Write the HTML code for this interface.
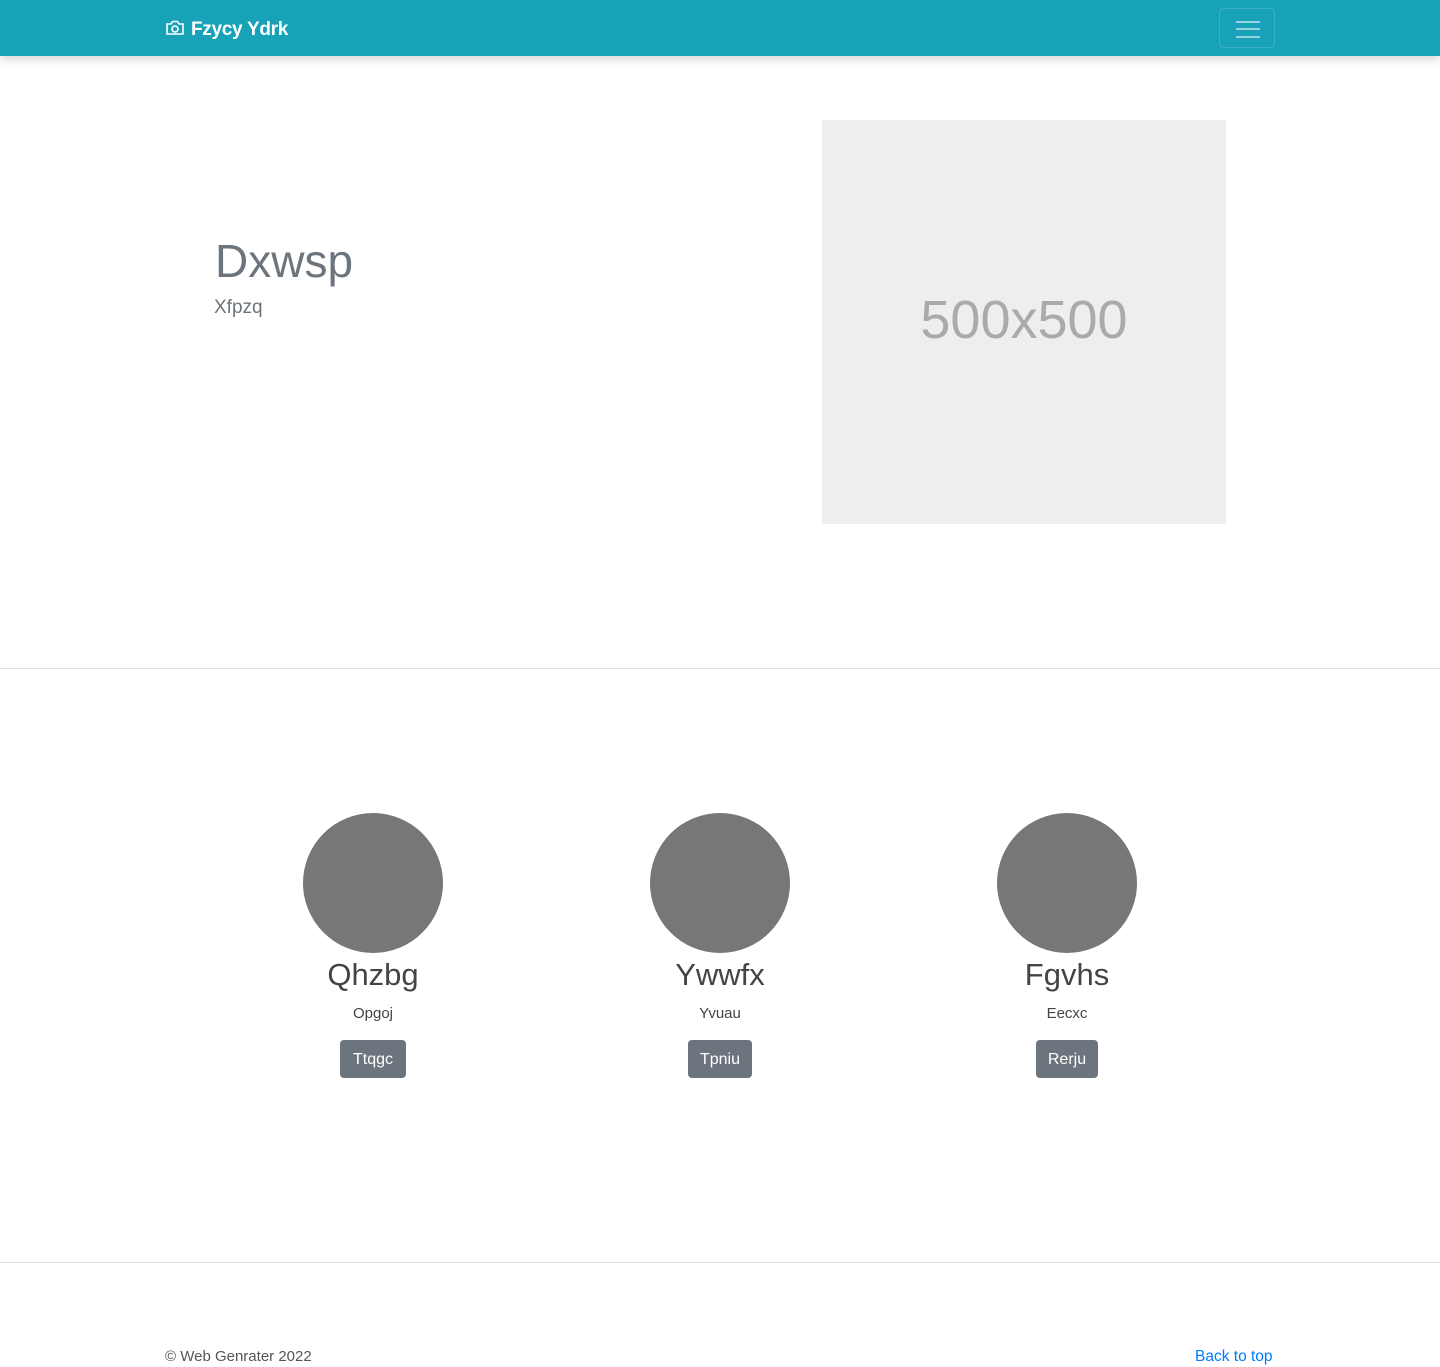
<!DOCTYPE html>
<html><head><style>
body{margin:0;font-family:"Liberation Sans",sans-serif;background:#fff;width:1440px;height:1367px;position:relative;overflow:hidden}
.nav{position:absolute;top:0;left:0;width:1440px;height:56px;background:#17a2b8;box-shadow:0 4px 8px rgba(0,0,0,.15)}
.brand{position:absolute;left:165px;top:19px;color:#fff;font-weight:bold;font-size:19px;letter-spacing:-0.3px}
.brand svg{vertical-align:-2px;margin-right:6px}
.tog{position:absolute;left:1219px;top:8px;width:56px;height:40px;border:1px solid rgba(255,255,255,.15);border-radius:4px;box-sizing:border-box}
.tog i{position:absolute;left:16px;width:24px;height:2px;background:rgba(255,255,255,.55)}
.t{position:absolute;color:#6c757d}
.img{position:absolute;left:822px;top:120px;width:404px;height:404px;background:#eee;color:#aaa;font-size:54px;text-align:center;line-height:400px}
hr{position:absolute;left:0;width:1440px;border:0;border-top:1px solid #dee2e6;margin:0}
.c{position:absolute;width:140px;height:140px;border-radius:50%;background:#777;top:813px}
.n{position:absolute;width:300px;text-align:center;color:#444}
.b{position:absolute;top:1040px;height:38px;background:#6c757d;color:#fff;border-radius:4px;font-size:16px;line-height:40px;text-align:center}
</style></head><body>
<div class="nav"><div class="brand"><svg width="20" height="18" viewBox="0 0 20 18" fill="none" stroke="#fff" stroke-width="1.6"><path d="M2 5h4l1.5-2.5h5L14 5h4v10H2z"/><circle cx="10" cy="10" r="3"/></svg>Fzycy Ydrk</div>
<div class="tog"><i style="top:12px"></i><i style="top:19px"></i><i style="top:27px"></i></div></div>
<div class="t" style="left:215px;top:234px;font-size:46px">Dxwsp</div>
<div class="t" style="left:214px;top:297px;font-size:19px">Xfpzq</div>
<div class="img">500x500</div>
<hr style="top:668px">
<div class="c" style="left:303px"></div><div class="c" style="left:650px"></div><div class="c" style="left:997px"></div>
<div class="n" style="left:223px;top:957px;font-size:31px">Qhzbg</div>
<div class="n" style="left:570px;top:957px;font-size:31px">Ywwfx</div>
<div class="n" style="left:917px;top:957px;font-size:31px">Fgvhs</div>
<div class="n" style="left:223px;top:1005px;font-size:15px">Opgoj</div>
<div class="n" style="left:570px;top:1005px;font-size:15px">Yvuau</div>
<div class="n" style="left:917px;top:1005px;font-size:15px">Eecxc</div>
<div class="b" style="left:340px;width:66px">Ttqgc</div>
<div class="b" style="left:688px;width:64px">Tpniu</div>
<div class="b" style="left:1036px;width:62px">Rerju</div>
<hr style="top:1262px">
<div class="t" style="left:165px;top:1348px;font-size:15px;color:#555">© Web Genrater 2022</div>
<div class="t" style="left:1195px;top:1348px;font-size:15.5px;color:#007bff">Back to top</div>
</body></html>
